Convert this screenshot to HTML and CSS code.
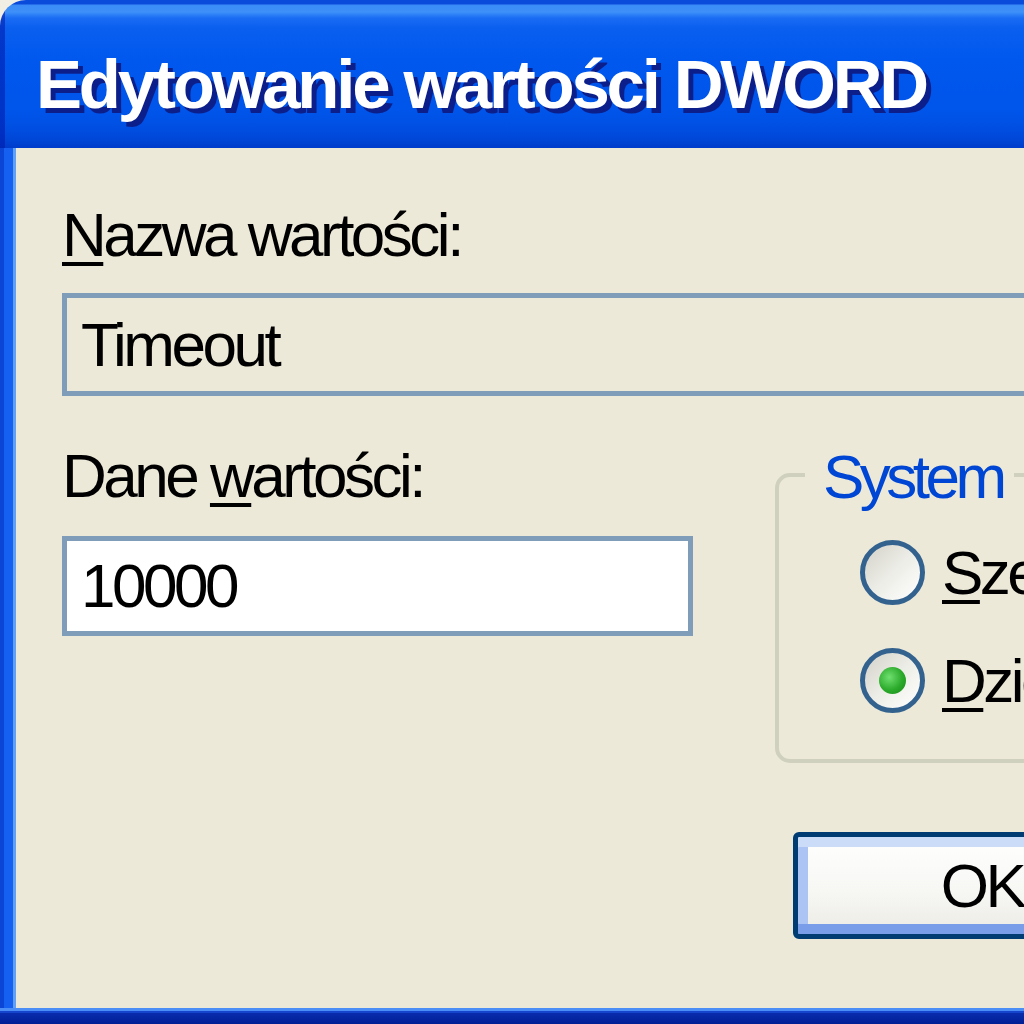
FILE: index.html
```html
<!DOCTYPE html>
<html lang="pl">
<head>
<meta charset="utf-8">
<title>Edytowanie wartości DWORD</title>
<link rel="stylesheet" href="styles.css">
</head>
<body>
<div class="window">
  <div class="titlebar"><span class="title">Edytowanie wartości DWORD</span></div>
  <div class="frame">
    <div class="edge-left"></div>
    <div class="client">
      <div class="label first"><u>N</u>azwa wartości:</div>
      <div class="field readonly">Timeout</div>
      <div class="row2">
        <div class="col-data">
          <div class="label">Dane <u>w</u>artości:</div>
          <div class="field edit">10000</div>
        </div>
        <fieldset class="group">
          <legend class="legend">System</legend>
          <div class="radios">
            <div class="radio-row"><span class="radio"></span><span class="rlabel"><u>S</u>zesnastkowy</span></div>
            <div class="radio-row"><span class="radio checked"></span><span class="rlabel"><u>D</u>ziesiętny</span></div>
          </div>
        </fieldset>
      </div>
      <div class="buttons">
        <button class="btn default">OK</button>
        <button class="btn">Anuluj</button>
      </div>
    </div>
  </div>
  <div class="edge-bottom"></div>
</div>
</body>
</html>
```
FILE: styles.css
```css
html, body {
  margin: 0;
  padding: 0;
  width: 1024px;
  height: 1024px;
  overflow: hidden;
  background: #F1EEE3;
}

.window {
  width: 1500px;
  height: 1024px;
  display: flex;
  flex-direction: column;
  font-family: "Liberation Sans", Arial, sans-serif;
  color: #000;
}

.titlebar {
  height: 148px;
  flex: none;
  box-sizing: border-box;
  padding: 45px 0 0 36px;
  border-top-left-radius: 26px;
  background:
    linear-gradient(to right, rgba(0, 24, 170, 0.55) 0 5px, transparent 5px),
    linear-gradient(to bottom,
      #0A4BDC 0, #0A4BDC 4px,
      #3B8BF6 5px, #3E91F8 12px,
      #1A6CF3 18px, #0A5FEF 28px,
      #0058EE 60px, #0055EA 110px,
      #004FE2 128px, #0046D6 140px, #003CCB 148px);
}

.title {
  display: block;
  font-size: 69px;
  line-height: 80px;
  font-weight: bold;
  letter-spacing: -3.2px;
  color: #fff;
  white-space: nowrap;
  text-shadow: 5px 5px 0 #0B1E8A;
}

.frame {
  flex: 1;
  display: flex;
  min-height: 0;
}

.edge-left {
  width: 16px;
  flex: none;
  background: linear-gradient(to right, #0A45D6 0 4px, #1560F1 4px 13px, #62A0F8 13px 16px);
}

.client {
  flex: 1;
  background: #ECE9D8;
  padding-left: 46px;
  display: flex;
  flex-direction: column;
  align-items: flex-start;
}

.edge-bottom {
  height: 16px;
  flex: none;
  background: linear-gradient(to bottom, #4A8EF6 0 3px, #1545CC 3px 5px, #0A2DAE 5px, #001E94 16px);
}

.label {
  font-size: 62px;
  line-height: 70px;
  letter-spacing: -3.5px;
  white-space: nowrap;
}

.label.first {
  margin-top: 52px;
}

u {
  text-decoration: underline;
  text-decoration-thickness: 4px;
  text-underline-offset: 6px;
}

.field {
  box-sizing: border-box;
  border: 5px solid #7F9DB9;
  padding-left: 14px;
  font-size: 62px;
  letter-spacing: -3.5px;
  white-space: nowrap;
}

.field.readonly {
  margin-top: 23px;
  width: 1300px;
  height: 103px;
  line-height: 93px;
  background: #ECE9D8;
}

.row2 {
  display: flex;
  align-items: flex-start;
  gap: 82px;
  margin-top: 45px;
}

.col-data {
  width: 631px;
  display: flex;
  flex-direction: column;
}

.field.edit {
  margin-top: 25px;
  width: 631px;
  height: 100px;
  line-height: 90px;
  background: #fff;
}

.group {
  margin: 0;
  padding: 0;
  width: 640px;
  box-sizing: border-box;
  min-width: 0;
  border: 4px solid #D0D0BF;
  border-radius: 15px;
}

.legend {
  margin-left: 26px;
  padding: 5px 11px 0 18px;
  color: #0046D5;
  font-size: 62px;
  line-height: 62px;
  letter-spacing: -4.5px;
}

.radios {
  display: flex;
  flex-direction: column;
  gap: 43px;
  padding: 32px 0 46px 81px;
}

.radio-row {
  display: flex;
  align-items: center;
  gap: 17px;
  height: 65px;
}

.radio {
  flex: none;
  width: 65px;
  height: 65px;
  box-sizing: border-box;
  border-radius: 50%;
  border: 5px solid #33628F;
  background: linear-gradient(135deg, #D2D2CA 0%, #EDEDE7 50%, #FFFFFF 100%);
  display: flex;
  align-items: center;
  justify-content: center;
}

.radio.checked::after {
  content: "";
  width: 27px;
  height: 27px;
  border-radius: 50%;
  background: radial-gradient(circle at 38% 38%, #6FE06F 0%, #2BAA2B 55%, #168A16 100%);
}

.rlabel {
  font-size: 62px;
  line-height: 65px;
  letter-spacing: -3.5px;
  white-space: nowrap;
}

.buttons {
  display: flex;
  gap: 40px;
  margin-top: 69px;
  margin-left: 731px;
}

.btn {
  width: 378px;
  height: 107px;
  box-sizing: border-box;
  padding: 0;
  border: 5px solid #003C74;
  border-radius: 6px;
  font-family: "Liberation Sans", Arial, sans-serif;
  font-size: 62px;
  line-height: 97px;
  letter-spacing: -3.5px;
  color: #000;
  background: linear-gradient(to bottom, #FFFFFF 0%, #F7F7F4 55%, #ECEBE5 100%);
}

.btn.default {
  box-shadow:
    inset 0 10px 0 #CBDCF8,
    inset 0 -10px 0 #7A9DEA,
    inset 10px 0 0 #ABC4F3,
    inset -10px 0 0 #ABC4F3;
}
```
